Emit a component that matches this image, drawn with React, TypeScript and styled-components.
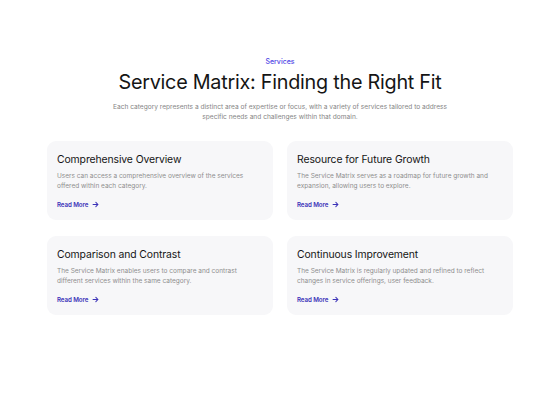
import styled, { createGlobalStyle } from 'styled-components'

const GlobalStyle = createGlobalStyle`
  html, body {
    margin: 0;
    padding: 0;
    background: #ffffff;
  }
  body {
    font-family: Inter, "Noto Sans", "Liberation Sans", sans-serif;
    color: #111111;
    -webkit-font-smoothing: antialiased;
  }
`

const Page = styled.section`
  width: 560px;
  height: 400px;
  box-sizing: border-box;
  padding-top: 57px;
  display: flex;
  flex-direction: column;
  align-items: center;
`

const Eyebrow = styled.div`
  font-size: 7px;
  line-height: 10px;
  color: #4f46e5;
  font-weight: 500;
`

const Heading = styled.h1`
  margin: 2px 0 0;
  font-size: 19.8px;
  line-height: 26px;
  font-weight: 400;
  letter-spacing: -0.25px;
  color: #151515;
`

const Lead = styled.p`
  margin: 7px 0 0;
  width: 360px;
  text-align: center;
  font-size: 6.6px;
  line-height: 10px;
  color: #858585;
`

const Grid = styled.div`
  margin-top: 19px;
  width: 466px;
  display: grid;
  grid-template-columns: 1fr 1fr;
  column-gap: 14px;
  row-gap: 16px;
`

const Card = styled.article`
  background: #f7f7f9;
  border-radius: 9px;
  padding: 12px 10px 11px;
  height: 79px;
  box-sizing: border-box;
  display: flex;
  flex-direction: column;
`

const CardTitle = styled.h3`
  margin: 0;
  font-size: 10.4px;
  line-height: 14px;
  font-weight: 400;
  letter-spacing: -0.1px;
  color: #151515;
`

const CardText = styled.p`
  margin: 4px 0 0;
  width: 200px;
  font-size: 6.5px;
  line-height: 10px;
  color: #8e8e8e;
`

const ReadMore = styled.a`
  margin-top: 9px;
  display: inline-flex;
  align-items: center;
  gap: 4px;
  font-size: 6.2px;
  line-height: 9px;
  font-weight: 600;
  color: #3b32b8;
  text-decoration: none;
  letter-spacing: -0.1px;
`

const services = [
  {
    title: 'Comprehensive Overview',
    text: 'Users can access a comprehensive overview of the services offered within each category.',
  },
  {
    title: 'Resource for Future Growth',
    text: 'The Service Matrix serves as a roadmap for future growth and expansion, allowing users to explore.',
  },
  {
    title: 'Comparison and Contrast',
    text: 'The Service Matrix enables users to compare and contrast different services within the same category.',
  },
  {
    title: 'Continuous Improvement',
    text: 'The Service Matrix is regularly updated and refined to reflect changes in service offerings, user feedback.',
  },
]

const Arrow = () => (
  <svg width="7" height="7" viewBox="0 0 10 10" fill="none" stroke="currentColor" strokeWidth="1.5" strokeLinecap="round" strokeLinejoin="round">
    <path d="M1.5 5h7M5.5 2l3 3-3 3" />
  </svg>
)

export default function App() {
  return (
    <>
      <GlobalStyle />
      <Page>
        <Eyebrow>Services</Eyebrow>
        <Heading>Service Matrix: Finding the Right Fit</Heading>
        <Lead>
          Each category represents a distinct area of expertise or focus, with a variety of services tailored to address
          specific needs and challenges within that domain.
        </Lead>
        <Grid>
          {services.map((s) => (
            <Card key={s.title}>
              <CardTitle>{s.title}</CardTitle>
              <CardText>{s.text}</CardText>
              <ReadMore href="#">
                Read More <Arrow />
              </ReadMore>
            </Card>
          ))}
        </Grid>
      </Page>
    </>
  )
}
